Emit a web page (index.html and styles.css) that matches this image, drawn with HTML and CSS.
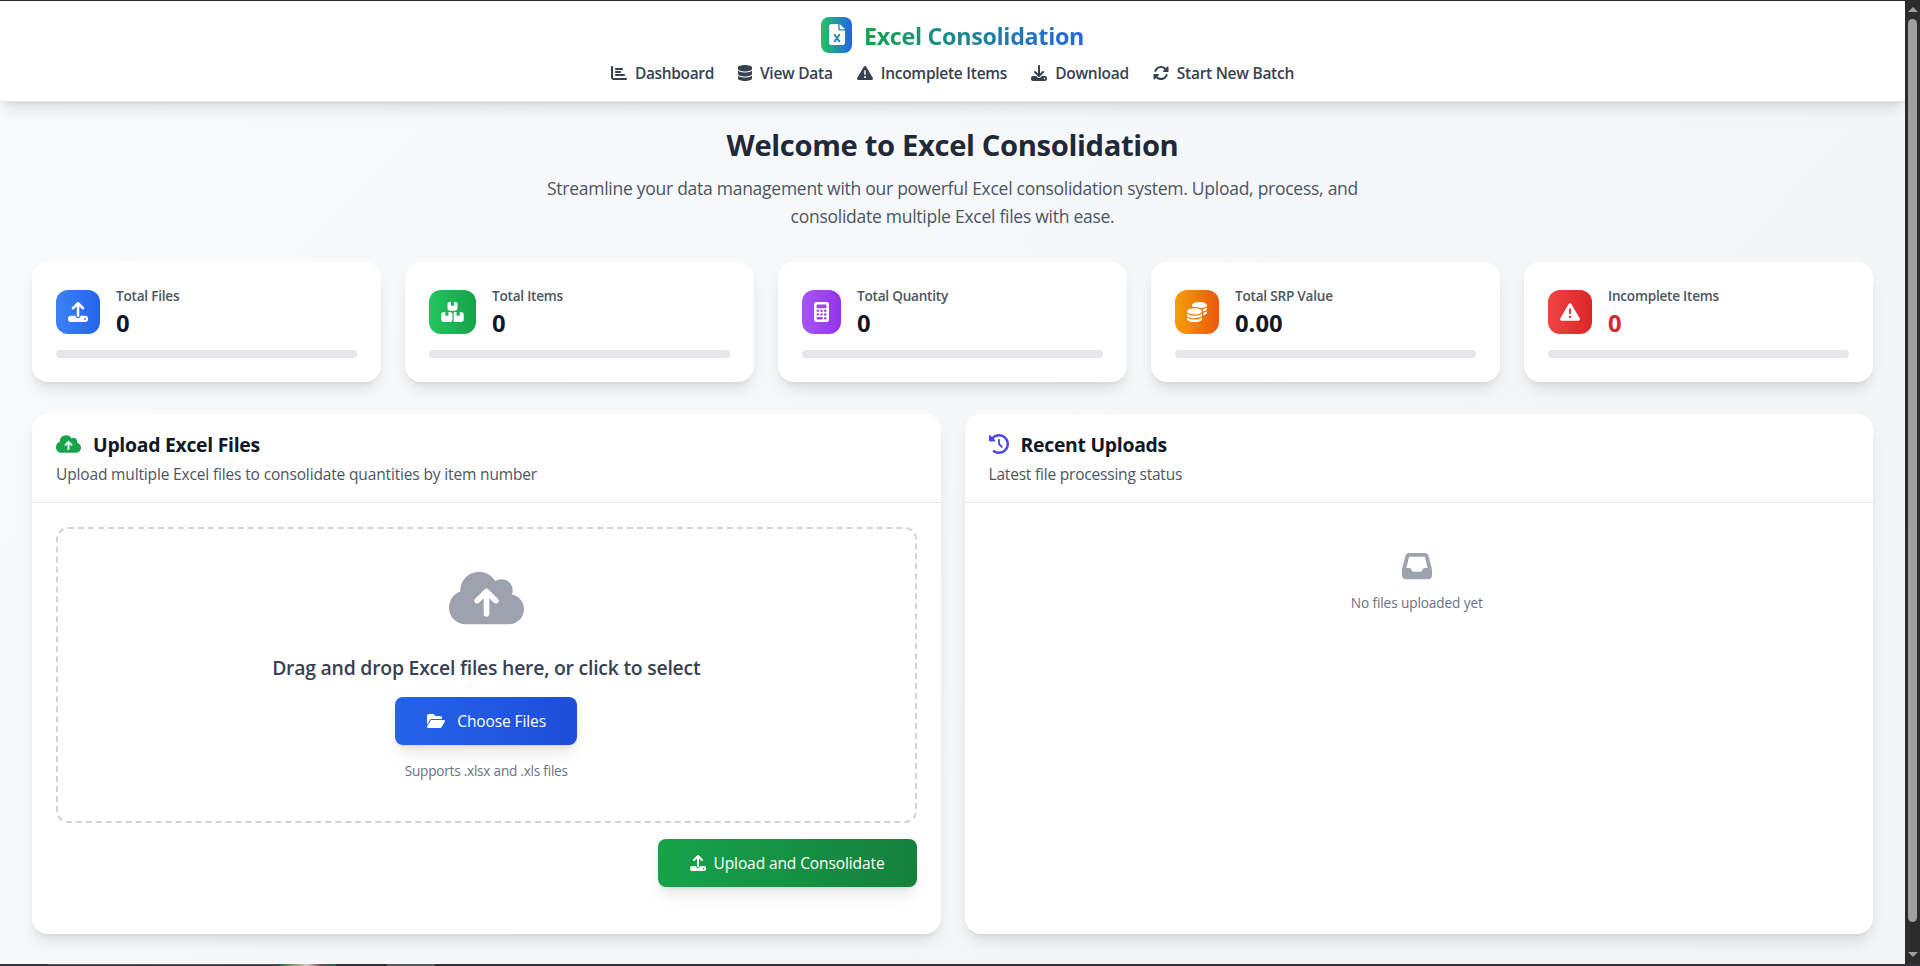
FILE: index.html
```
<!DOCTYPE html>
<html lang="en">
<head>
<meta charset="utf-8">
<title>Excel Consolidation</title>
<link rel="stylesheet" href="styles.css">
</head>
<body>
<svg class="sprite" width="0" height="0" aria-hidden="true">
  <symbol id="i-upload" viewBox="0 0 512 512"><path d="M288 109.3V352c0 17.7-14.3 32-32 32s-32-14.3-32-32V109.3l-73.4 73.4c-12.5 12.5-32.8 12.5-45.3 0s-12.5-32.8 0-45.3l128-128c12.5-12.5 32.8-12.5 45.3 0l128 128c12.5 12.5 12.5 32.8 0 45.3s-32.8 12.5-45.3 0L288 109.3zM64 352H192c0 35.3 28.7 64 64 64s64-28.7 64-64H448c35.3 0 64 28.7 64 64v32c0 35.3-28.7 64-64 64H64c-35.3 0-64-28.7-64-64V416c0-35.3 28.7-64 64-64zM432 456a24 24 0 1 0 0-48 24 24 0 1 0 0 48z"/></symbol>
  <symbol id="i-warning" viewBox="0 0 512 512"><path d="M256 32c14.2 0 27.3 7.5 34.5 19.8l216 368c7.3 12.4 7.3 27.7 .2 40.1S486.3 480 472 480H40c-14.3 0-27.6-7.7-34.7-20.1s-7-27.8 .2-40.1l216-368C228.7 39.5 241.8 32 256 32zm0 128c-13.3 0-24 10.7-24 24V296c0 13.3 10.7 24 24 24s24-10.7 24-24V184c0-13.3-10.7-24-24-24zm32 224a32 32 0 1 0 -64 0 32 32 0 1 0 64 0z"/></symbol>
  <symbol id="i-cloud" viewBox="0 0 640 512"><path d="M144 480C64.5 480 0 415.5 0 336c0-62.8 40.2-116.2 96.2-135.9c-.1-2.7-.2-5.4-.2-8.1c0-88.4 71.6-160 160-160c59.3 0 111 32.2 138.7 80.2C409.9 102 428.3 96 448 96c53 0 96 43 96 96c0 12.2-2.3 23.8-6.4 34.6C596 238.4 640 290.1 640 352c0 70.7-57.3 128-128 128H144zm79-217c-9.4 9.4-9.4 24.6 0 33.9s24.6 9.4 33.9 0l39-39V392c0 13.3 10.7 24 24 24s24-10.7 24-24V257.9l39 39c9.4 9.4 24.6 9.4 33.9 0s9.4-24.6 0-33.9l-80-80c-9.4-9.4-24.6-9.4-33.9 0l-80 80z"/></symbol>
</svg>
<div class="window">
  <div class="viewport">
    <header class="header">
      <div class="brand">
        <span class="brand-icon"><svg width="16" height="21" viewBox="0 0 384 512" preserveAspectRatio="none"><path d="M64 0C28.7 0 0 28.7 0 64V448c0 35.3 28.7 64 64 64H320c35.3 0 64-28.7 64-64V160H256c-17.7 0-32-14.3-32-32V0H64zM256 0V128H384L256 0zM155.7 250.2L192 302.1l36.3-51.9c7.6-10.9 22.6-13.5 33.4-5.9s13.5 22.6 5.9 33.4L221.3 344l46.4 66.2c7.6 10.9 5 25.8-5.9 33.4s-25.8 5-33.4-5.9L192 385.8l-36.3 51.9c-7.6 10.9-22.6 13.5-33.4 5.9s-13.5-22.6-5.9-33.4L162.7 344l-46.4-66.2c-7.6-10.9-5-25.8 5.9-33.4s25.8-5 33.4 5.9z"/></svg></span>
        <span class="brand-name">Excel Consolidation</span>
      </div>
      <nav class="nav">
        <a class="nav-item dashboard"><svg width="16" height="16" viewBox="0 0 512 512"><path d="M32 32c17.7 0 32 14.3 32 32V400c0 8.8 7.2 16 16 16H480c17.7 0 32 14.3 32 32s-14.3 32-32 32H80c-44.2 0-80-35.8-80-80V64C0 46.3 14.3 32 32 32zm96 96c0-17.7 14.3-32 32-32l192 0c17.7 0 32 14.3 32 32s-14.3 32-32 32l-192 0c-17.7 0-32-14.3-32-32zm32 64H288c17.7 0 32 14.3 32 32s-14.3 32-32 32H160c-17.7 0-32-14.3-32-32s14.3-32 32-32zm0 96H416c17.7 0 32 14.3 32 32s-14.3 32-32 32H160c-17.7 0-32-14.3-32-32s14.3-32 32-32z"/></svg><span>Dashboard</span></a>
        <a class="nav-item"><svg width="14" height="16" viewBox="0 0 448 512"><path d="M448 80v48c0 44.2-100.3 80-224 80S0 172.2 0 128V80C0 35.8 100.3 0 224 0S448 35.8 448 80zM393.2 214.7c20.8-7.4 39.9-16.9 54.8-28.6V288c0 44.2-100.3 80-224 80S0 332.2 0 288V186.1c14.9 11.8 34 21.2 54.8 28.6C99.7 230.7 159.5 240 224 240s124.3-9.3 169.2-25.3zM0 346.1c14.9 11.8 34 21.2 54.8 28.6C99.7 390.7 159.5 400 224 400s124.3-9.3 169.2-25.3c20.8-7.4 39.9-16.9 54.8-28.6V432c0 44.2-100.3 80-224 80S0 476.2 0 432V346.1z"/></svg><span>View Data</span></a>
        <a class="nav-item"><svg width="16" height="16"><use href="#i-warning"/></svg><span>Incomplete Items</span></a>
        <a class="nav-item"><svg width="16" height="16" viewBox="0 0 512 512"><path d="M288 32c0-17.7-14.3-32-32-32s-32 14.3-32 32V274.7l-73.4-73.4c-12.5-12.5-32.8-12.5-45.3 0s-12.5 32.8 0 45.3l128 128c12.5 12.5 32.8 12.5 45.3 0l128-128c12.5-12.5 12.5-32.8 0-45.3s-32.8-12.5-45.3 0L288 274.7V32zM64 352c-35.3 0-64 28.7-64 64v32c0 35.3 28.7 64 64 64H448c35.3 0 64-28.7 64-64V416c0-35.3-28.7-64-64-64H346.5l-45.3 45.3c-25 25-65.5 25-90.5 0L165.5 352H64zm368 56a24 24 0 1 1 0 48 24 24 0 1 1 0-48z"/></svg><span>Download</span></a>
        <a class="nav-item"><svg width="16" height="16" viewBox="0 0 512 512"><path d="M142.9 142.9c62.2-62.2 162.7-62.5 225.3-1L327 183c-6.9 6.9-8.9 17.2-5.2 26.2s12.5 14.8 22.2 14.8H463.5c0 0 0 0 0 0H472c13.3 0 24-10.7 24-24V72c0-9.7-5.8-18.5-14.8-22.2s-19.3-1.7-26.2 5.2L413.4 96.6c-87.6-86.5-228.7-86.2-315.8 1C73.2 122 55.6 150.7 44.8 181.4c-5.9 16.7 2.9 34.9 19.5 40.8s34.9-2.9 40.8-19.5c7.7-21.8 20.2-42.3 37.8-59.8zM16 312v7.6 .7V440c0 9.7 5.8 18.5 14.8 22.2s19.3 1.7 26.2-5.2l41.6-41.6c87.6 86.5 228.7 86.2 315.8-1c24.4-24.4 42.1-53.1 52.9-83.7c5.9-16.7-2.9-34.9-19.5-40.8s-34.9 2.9-40.8 19.5c-7.7 21.8-20.2 42.3-37.8 59.8c-62.2 62.2-162.7 62.5-225.3 1L185 329c6.9-6.9 8.9-17.2 5.2-26.2s-12.5-14.8-22.2-14.8H48.4h-.7H40c-13.3 0-24 10.7-24 24z"/></svg><span>Start New Batch</span></a>
      </nav>
    </header>
    <main class="main">
      <section class="hero">
        <h1>Welcome to Excel Consolidation</h1>
        <p>Streamline your data management with our powerful Excel consolidation system. Upload, process, and<br>consolidate multiple Excel files with ease.</p>
      </section>
      <section class="stats">
        <article class="stat">
          <div class="stat-top"><span class="stat-icon blue"><svg width="20" height="20"><use href="#i-upload"/></svg></span><div><p class="stat-label">Total Files</p><p class="stat-value">0</p></div></div>
          <div class="track"></div>
        </article>
        <article class="stat">
          <div class="stat-top"><span class="stat-icon green"><svg width="23" height="20" viewBox="0 0 576 512"><path d="M248 0H208c-26.5 0-48 21.5-48 48V160c0 35.3 28.7 64 64 64H352c35.3 0 64-28.7 64-64V48c0-26.5-21.5-48-48-48H328V80c0 8.8-7.2 16-16 16H264c-8.8 0-16-7.2-16-16V0zM64 256c-35.3 0-64 28.7-64 64V448c0 35.3 28.7 64 64 64H224c35.3 0 64-28.7 64-64V320c0-35.3-28.7-64-64-64H184v80c0 8.8-7.2 16-16 16H120c-8.8 0-16-7.2-16-16V256H64zM352 512H512c35.3 0 64-28.7 64-64V320c0-35.3-28.7-64-64-64H472v80c0 8.8-7.2 16-16 16H408c-8.8 0-16-7.2-16-16V256H352c-15 0-28.8 5.1-39.7 13.8c4.9 10.4 7.7 22 7.7 34.2V464c0 12.2-2.8 23.8-7.7 34.2C323.2 506.9 337 512 352 512z"/></svg></span><div><p class="stat-label">Total Items</p><p class="stat-value">0</p></div></div>
          <div class="track"></div>
        </article>
        <article class="stat">
          <div class="stat-top"><span class="stat-icon purple"><svg width="15" height="20" viewBox="0 0 384 512"><path d="M64 0C28.7 0 0 28.7 0 64V448c0 35.3 28.7 64 64 64H320c35.3 0 64-28.7 64-64V64c0-35.3-28.7-64-64-64H64zM96 64H288c17.7 0 32 14.3 32 32v32c0 17.7-14.3 32-32 32H96c-17.7 0-32-14.3-32-32V96c0-17.7 14.3-32 32-32zm32 160a32 32 0 1 1 -64 0 32 32 0 1 1 64 0zM96 352a32 32 0 1 1 0-64 32 32 0 1 1 0 64zM64 416c0-17.7 14.3-32 32-32h96c17.7 0 32 14.3 32 32s-14.3 32-32 32H96c-17.7 0-32-14.3-32-32zM192 256a32 32 0 1 1 0-64 32 32 0 1 1 0 64zm32 64a32 32 0 1 1 -64 0 32 32 0 1 1 64 0zm64-64a32 32 0 1 1 0-64 32 32 0 1 1 0 64zm32 64a32 32 0 1 1 -64 0 32 32 0 1 1 64 0zM288 448a32 32 0 1 1 0-64 32 32 0 1 1 0 64z"/></svg></span><div><p class="stat-label">Total Quantity</p><p class="stat-value">0</p></div></div>
          <div class="track"></div>
        </article>
        <article class="stat">
          <div class="stat-top"><span class="stat-icon orange"><svg width="20" height="20" viewBox="0 0 512 512"><path d="M512 80c0 18-14.3 34.6-38.4 48c-29.1 16.1-72.5 27.5-122.3 30.9c-3.7-1.8-7.4-3.5-11.3-5C300.6 137.4 248.2 128 192 128c-8.3 0-16.4 .2-24.5 .6l-1.1-.6C142.3 114.6 128 98 128 80c0-44.2 86-80 192-80S512 35.8 512 80zM160.7 161.1c10.2-.7 20.7-1.1 31.3-1.1c62.2 0 117.4 12.3 152.5 31.4C369.3 204.9 384 221.7 384 240c0 4-.7 7.9-2.1 11.7c-4.6 13.2-17 25.3-35 35.5c-.4 .2-.9 .5-1.3 .7c-35 19.4-90.8 32-153.6 32c-59.6 0-112.9-11.3-148.2-29.1c-1.9-.9-3.7-1.9-5.5-2.9C14.3 274.6 0 258 0 240c0-34.8 53.4-64.5 128-75.4c10.5-1.5 21.4-2.7 32.7-3.5zM416 240c0-21.9-10.6-39.9-24.1-53.4c28.3-4.4 54.2-11.4 76.2-20.5c16.3-6.8 31.5-15.2 43.9-25.5V176c0 19.3-16.5 37.1-43.8 50.9c-14.6 7.4-32.4 13.7-52.4 18.5c.1-1.8 .2-3.5 .2-5.3zm-32 96c0 18-14.3 34.6-38.4 48c-1.8 1-3.6 1.9-5.5 2.9C304.9 404.7 251.6 416 192 416c-62.8 0-118.6-12.6-153.6-32C14.3 370.6 0 354 0 336V300.6c12.5 10.3 27.6 18.7 43.9 25.5C83.4 342.6 135.8 352 192 352s108.6-9.4 148.1-25.9c7.8-3.2 15.3-6.9 22.4-10.9c6.1-3.4 11.8-7.2 17.2-11.2c1.5-1.1 2.9-2.3 4.3-3.4V336zm32 0V278.1c19-4.2 36.5-9.5 52.1-16c16.3-6.8 31.5-15.2 43.9-25.5V272c0 10.5-5 21-14.9 30.9c-16.3 16.3-45 29.7-81.3 38.4c.1-1.7 .2-3.5 .2-5.3zM192 448c56.2 0 108.6-9.4 148.1-25.9c16.3-6.8 31.5-15.2 43.9-25.5V432c0 44.2-86 80-192 80S0 476.2 0 432V396.6c12.5 10.3 27.6 18.7 43.9 25.5C83.4 438.6 135.8 448 192 448z"/></svg></span><div><p class="stat-label">Total SRP Value</p><p class="stat-value">0.00</p></div></div>
          <div class="track"></div>
        </article>
        <article class="stat">
          <div class="stat-top"><span class="stat-icon red"><svg width="20" height="20"><use href="#i-warning"/></svg></span><div><p class="stat-label">Incomplete Items</p><p class="stat-value alert">0</p></div></div>
          <div class="track"></div>
        </article>
      </section>
      <section class="panels">
        <article class="panel">
          <div class="panel-head">
            <h2><svg class="green-ink" width="25" height="20"><use href="#i-cloud"/></svg><span>Upload Excel Files</span></h2>
            <p>Upload multiple Excel files to consolidate quantities by item number</p>
          </div>
          <div class="panel-body">
            <div class="dropzone">
              <svg class="cloud" width="75" height="60"><use href="#i-cloud"/></svg>
              <p class="drop-text">Drag and drop Excel files here, or click to select</p>
              <button class="btn choose"><svg width="18" height="16" viewBox="0 0 576 512"><path d="M88.7 223.8L0 375.8V96C0 60.7 28.7 32 64 32H181.5c17 0 33.3 6.7 45.3 18.7l26.5 26.5c12 12 28.3 18.7 45.3 18.7H416c35.3 0 64 28.7 64 64v32H144c-22.8 0-43.8 12.1-55.3 31.8zm27.6 16.1C122.1 230 132.6 224 144 224H544c11.5 0 22 6.1 27.7 16.1s5.7 22.2-.1 32.1l-112 192C453.9 474 443.4 480 432 480H32c-11.5 0-22-6.1-27.7-16.1s-5.7-22.2 .1-32.1l112-192z"/></svg><span>Choose Files</span></button>
              <p class="hint">Supports .xlsx and .xls files</p>
            </div>
            <button class="btn submit"><svg width="16" height="16"><use href="#i-upload"/></svg><span>Upload and Consolidate</span></button>
          </div>
        </article>
        <article class="panel">
          <div class="panel-head recent">
            <h2><svg class="indigo-ink" width="20" height="20" viewBox="0 0 512 512"><path d="M75 75L41 41C25.9 25.9 0 36.6 0 57.9V168c0 13.3 10.7 24 24 24H134.1c21.4 0 32.1-25.9 17-41l-30.8-30.8C155 85.5 203 64 256 64c106 0 192 86 192 192s-86 192-192 192c-40.8 0-78.6-12.7-109.7-34.4c-14.5-10.1-34.4-6.6-44.6 7.9s-6.6 34.4 7.9 44.6C151.2 495 201.7 512 256 512c141.4 0 256-114.6 256-256S397.4 0 256 0C185.3 0 121.3 28.7 75 75zm181 53c-13.3 0-24 10.7-24 24V256c0 6.4 2.5 12.5 7 17l72 72c9.4 9.4 24.6 9.4 33.9 0s9.4-24.6 0-33.9l-65-65V152c0-13.3-10.7-24-24-24z"/></svg><span>Recent Uploads</span></h2>
            <p>Latest file processing status</p>
          </div>
          <div class="empty">
            <svg width="30" height="30" viewBox="0 0 512 512"><path d="M121 32C91.6 32 66 52 58.9 80.5L1.9 308.4C.6 313.5 0 318.7 0 323.9V416c0 35.3 28.7 64 64 64H448c35.3 0 64-28.7 64-64V323.9c0-5.2-.6-10.4-1.9-15.5l-57-227.9C446 52 420.4 32 391 32H121zm0 64H391l48 192H387.8c-12.1 0-23.2 6.8-28.6 17.7l-14.3 28.6c-5.4 10.8-16.5 17.7-28.6 17.7H195.8c-12.1 0-23.2-6.8-28.6-17.7l-14.3-28.6c-5.4-10.8-16.5-17.7-28.6-17.7H73L121 96z"/></svg>
            <p>No files uploaded yet</p>
          </div>
        </article>
      </section>
    </main>
  </div>
  <div class="scrollbar"><span class="arrow up"></span><span class="thumb"></span><span class="arrow down"></span></div>
  <div class="edge"><span class="edge-line"></span><span class="edge-art"></span><span class="edge-tab"></span></div>
</div>
</body>
</html>
```
FILE: styles.css
```
* { box-sizing: border-box; margin: 0; padding: 0; }
body {
  font-family: "Open Sans", "Noto Sans", sans-serif;
  color: #111827;
  height: 966px;
  overflow: hidden;
}
svg { display: block; fill: currentColor; flex: none; }
.sprite { position: absolute; }

.window {
  display: grid;
  grid-template-columns: minmax(0, 1fr) 15px;
  grid-template-rows: 963px 2px;
  height: 966px;
  border-top: 1px solid #2b2930;
  background: #313036;
}
.viewport {
  background: linear-gradient(135deg, #f9fafb, #f3f4f6);
  overflow: hidden;
}

/* Header */
.header {
  position: relative;
  height: 101px;
  padding-top: 16px;
  background: #fff;
  border-bottom: 1px solid #e5e7eb;
  box-shadow: 0 10px 15px -3px rgba(0, 0, 0, .1), 0 4px 6px -4px rgba(0, 0, 0, .1);
  display: flex;
  flex-direction: column;
  align-items: center;
}
.brand { display: flex; align-items: center; gap: 12px; height: 36px; }
.brand-icon {
  width: 31px;
  height: 36px;
  padding: 7px 0 0 8px;
  border-radius: 8px;
  color: #fff;
  background: linear-gradient(90deg, #22c55e, #2563eb);
}
.brand-name {
  padding-top: 2px;
  font-size: 23.3px;
  font-weight: 700;
  line-height: 36px;
  letter-spacing: -.31px;
  color: transparent;
  background: linear-gradient(90deg, #16a34a, #2563eb);
  -webkit-background-clip: text;
  background-clip: text;
}
.nav { display: flex; gap: 24px; margin-top: 8px; }
.nav-item {
  display: flex;
  align-items: center;
  gap: 8px;
  height: 24px;
  font-size: 15.5px;
  font-weight: 600;
  line-height: 24px;
  letter-spacing: -.26px;
  color: #374151;
}
.dashboard { letter-spacing: -.36px; }

/* Hero */
.main { padding: 24px 32px; }
.hero { height: 136px; text-align: center; }
.hero h1 {
  padding-top: 1px;
  font-size: 29.2px;
  line-height: 36px;
  letter-spacing: -.35px;
  color: #1f2937;
}
.hero p {
  margin-top: 11px;
  font-size: 17.5px;
  line-height: 28px;
  letter-spacing: -.265px;
  color: #4b5563;
}

/* Stat cards */
.stats { display: grid; grid-template-columns: repeat(5, minmax(0, 1fr)); gap: 24px; }
.stat, .panel {
  background: #fff;
  border-radius: 16px;
  box-shadow: 0 10px 15px -3px rgba(0, 0, 0, .1), 0 4px 6px -4px rgba(0, 0, 0, .1);
}
.stat { padding: 24px; height: 120px; }
.stat-top { display: flex; align-items: center; gap: 16px; height: 52px; }
.stat-icon { padding: 12px; border-radius: 12px; color: #fff; }
.blue { background: linear-gradient(90deg, #3b82f6, #2563eb); }
.green { background: linear-gradient(90deg, #22c55e, #16a34a); }
.purple { background: linear-gradient(90deg, #a855f7, #9333ea); }
.orange { background: linear-gradient(90deg, #f59e0b, #ea580c); }
.red { background: linear-gradient(90deg, #ef4444, #dc2626); }
.stat-label { font-size: 13.6px; font-weight: 600; line-height: 20px; letter-spacing: -.23px; color: #4b5563; }
.stat-value { height: 32px; padding-top: 1px; font-size: 23.8px; font-weight: 700; line-height: 32px; }
.alert { color: #dc2626; }
.track { margin-top: 12px; height: 8px; border-radius: 4px; background: #e5e7eb; }

/* Panels */
.panels { display: grid; grid-template-columns: repeat(2, minmax(0, 1fr)); gap: 24px; margin-top: 32px; }
.panel { height: 520px; }
.panel-head { height: 89px; padding: 16px 24px; border-bottom: 1px solid #e5e7eb; }
.panel-head h2 {
  display: flex;
  align-items: center;
  gap: 12px;
  height: 28px;
  font-size: 19.4px;
  font-weight: 700;
  line-height: 28px;
  letter-spacing: -.28px;
}
.panel-head h2 span { padding-top: 1px; }
.panel-head p {
  margin-top: 4px;
  font-size: 15.5px;
  line-height: 24px;
  letter-spacing: -.15px;
  color: #4b5563;
}
.panel-head.recent p { letter-spacing: -.2px; }
.green-ink { color: #16a34a; }
.indigo-ink { color: #4f46e5; }
.panel-body { padding: 24px; display: flex; flex-direction: column; }
.dropzone {
  height: 296px;
  padding-top: 39px;
  border: 2px dashed #d1d5db;
  border-radius: 12px;
  display: flex;
  flex-direction: column;
  align-items: center;
}
.cloud { color: #9ca3af; }
.drop-text {
  margin-top: 26px;
  font-size: 19.4px;
  font-weight: 600;
  line-height: 28px;
  letter-spacing: -.23px;
  color: #374151;
}
.btn {
  display: flex;
  align-items: center;
  height: 48px;
  padding: 0 32px;
  border: 0;
  border-radius: 8px;
  color: #fff;
  font-family: inherit;
  font-size: 15.5px;
  line-height: 24px;
  letter-spacing: -.1px;
  white-space: nowrap;
  box-shadow: 0 10px 15px -3px rgba(0, 0, 0, .1), 0 4px 6px -4px rgba(0, 0, 0, .1);
}
.choose { width: 182px; margin-top: 15px; gap: 12px; background: linear-gradient(90deg, #2563eb, #1d4ed8); }
.submit {
  width: 259px;
  margin-top: 16px;
  align-self: flex-end;
  gap: 8px;
  letter-spacing: -.1px;
  background: linear-gradient(90deg, #16a34a, #15803d);
}
.hint { margin-top: 16px; font-size: 13.6px; line-height: 20px; letter-spacing: -.23px; color: #6b7280; }
.empty { padding: 48px 4px 0 0; display: flex; flex-direction: column; align-items: center; color: #9ca3af; }
.empty p { margin-top: 12px; font-size: 13.6px; line-height: 20px; letter-spacing: -.1px; color: #6b7280; }

/* Window chrome */
.scrollbar {
  display: flex;
  flex-direction: column;
  align-items: center;
  padding: 6px 0 7px;
  background: #2c2c2c;
}
.arrow { border: 5px solid transparent; border-top-width: 0; border-bottom: 5px solid #9f9f9f; }
.down { transform: rotate(180deg); }
.thumb { width: 9px; height: 903px; margin: 7px 1px auto 0; border-radius: 5px; background: #9f9f9f; }
.edge { grid-column: 1 / -1; display: flex; align-items: flex-start; height: 2px; padding-left: 48px; }
.edge-line { width: 230px; height: 1px; background: #5b5b5f; }
.edge-art { width: 58px; height: 2px; background: linear-gradient(90deg, #1d5a45, #8fae62 32%, #d9c7c4 50%, #6d4a52 75%, #1d6a4a); }
.edge-tab { width: 48px; height: 2px; margin-left: 51px; background: #5b595e; }
```
